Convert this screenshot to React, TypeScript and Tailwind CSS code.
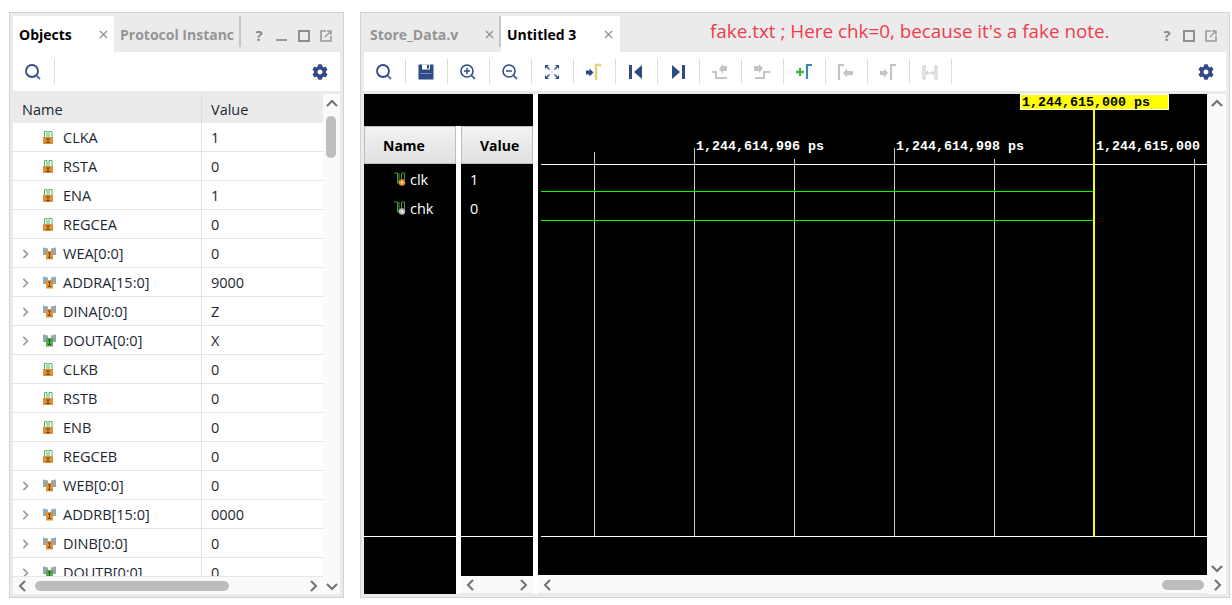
import type { ReactNode } from "react";
import { FaCog } from "react-icons/fa";

const ui = "font-['Open_Sans','Noto_Sans',sans-serif]";

type Row = { name: string; value: string; kind: "in" | "busIn" | "busOut" };

const rows: Row[] = [
  { name: "CLKA", value: "1", kind: "in" },
  { name: "RSTA", value: "0", kind: "in" },
  { name: "ENA", value: "1", kind: "in" },
  { name: "REGCEA", value: "0", kind: "in" },
  { name: "WEA[0:0]", value: "0", kind: "busIn" },
  { name: "ADDRA[15:0]", value: "9000", kind: "busIn" },
  { name: "DINA[0:0]", value: "Z", kind: "busIn" },
  { name: "DOUTA[0:0]", value: "X", kind: "busOut" },
  { name: "CLKB", value: "0", kind: "in" },
  { name: "RSTB", value: "0", kind: "in" },
  { name: "ENB", value: "0", kind: "in" },
  { name: "REGCEB", value: "0", kind: "in" },
  { name: "WEB[0:0]", value: "0", kind: "busIn" },
  { name: "ADDRB[15:0]", value: "0000", kind: "busIn" },
  { name: "DINB[0:0]", value: "0", kind: "busIn" },
  { name: "DOUTB[0:0]", value: "0", kind: "busOut" },
];

function PinIcon() {
  return (
    <svg width="10" height="13" viewBox="0 0 10 13" className="shrink-0">
      <path d="M1.5 6V0.5H4V6M6 6V0.5H9V6" fill="none" stroke="#55b25c" strokeWidth="1" />
      <rect x="0" y="6" width="10" height="7" fill="#dc9138" />
      <path d="M3 8H7M5 8V11.5M3 11.5H7" stroke="#6b4a20" strokeWidth="1" fill="none" />
    </svg>
  );
}

function BusIcon({ out }: { out?: boolean }) {
  return (
    <svg width="13" height="13" viewBox="0 0 13 13" className="shrink-0">
      <path d="M0 0.5L5 1.5V8H0ZM13 0.5L8 1.5V8H13Z" fill="#93a9b8" />
      <rect x="3" y="4" width="7" height="8.5" fill={out ? "#5aa84f" : "#e09338"} />
      <path d="M5 6H8M6.5 6V10.5M5 10.5H8" stroke={out ? "#1f5a1f" : "#6b4a20"} strokeWidth="1" fill="none" />
    </svg>
  );
}

function WaveIcon({ color }: { color: string }) {
  return (
    <svg width="12" height="15" viewBox="0 0 12 15" className="shrink-0">
      <path d="M0 1H3.5V11H5M5 11V1M7.5 8V1H10.5V8" fill="none" stroke="#3f9b45" strokeWidth="1" />
      <circle cx="8" cy="10.5" r="3.2" fill={color} />
      <circle cx="8" cy="10.5" r="1" fill="#fff" />
    </svg>
  );
}

function Chevron({ dir, className = "" }: { dir: "up" | "down" | "left" | "right"; className?: string }) {
  const d = {
    up: "M1 8L6 3L11 8",
    down: "M1 4L6 9L11 4",
    left: "M8 1L3 6L8 11",
    right: "M4 1L9 6L4 11",
  }[dir];
  return (
    <svg width="12" height="12" viewBox="0 0 12 12" className={className}>
      <path d={d} fill="none" stroke="#707070" strokeWidth="2" />
    </svg>
  );
}

function Glyph({ children }: { children: ReactNode }) {
  return (
    <svg width="18" height="18" viewBox="0 0 18 18">
      {children}
    </svg>
  );
}

const blue = "#2f4b85";
const dim = "#c4c4c4";

const SearchIcon = () => (
  <Glyph>
    <circle cx="8" cy="8" r="6" fill="none" stroke={blue} strokeWidth="1.8" />
    <path d="M12.5 12.5L16 16" stroke="#5a6f9d" strokeWidth="2" />
  </Glyph>
);
const SaveIcon = () => (
  <Glyph>
    <path d="M1.5 1.5H16.5V16.5H1.5Z" fill={blue} />
    <rect x="5" y="1.5" width="8" height="5" fill="#fff" />
    <rect x="10" y="2" width="2" height="3.5" fill={blue} />
    <rect x="3.5" y="10" width="11" height="1" fill="#7f93b8" />
  </Glyph>
);
const ZoomIn = () => (
  <Glyph>
    <circle cx="8" cy="8" r="6" fill="none" stroke={blue} strokeWidth="1.6" />
    <path d="M12.5 12.5L16 16" stroke="#5a6f9d" strokeWidth="2" />
    <path d="M5 8H11M8 5V11" stroke={blue} strokeWidth="1.5" />
  </Glyph>
);
const ZoomOut = () => (
  <Glyph>
    <circle cx="8" cy="8" r="6" fill="none" stroke={blue} strokeWidth="1.6" />
    <path d="M12.5 12.5L16 16" stroke="#5a6f9d" strokeWidth="2" />
    <path d="M5 8H11" stroke={blue} strokeWidth="1.5" />
  </Glyph>
);
const FitIcon = () => (
  <Glyph>
    <path d="M2 2H6L2 6ZM16 2H12L16 6ZM2 16H6L2 12ZM16 16H12L16 12Z" fill={blue} />
    <path d="M4 4L6.5 6.5M14 4L11.5 6.5M4 14L6.5 11.5M14 14L11.5 11.5" stroke={blue} strokeWidth="1.4" />
  </Glyph>
);
const GoCursor = () => (
  <Glyph>
    <path d="M1 7.5H4.5V5.5L8.5 9.5L4.5 13.5V11.5H1Z" fill={blue} />
    <path d="M11 17V2H16" fill="none" stroke="#e8cf7a" strokeWidth="2.4" />
  </Glyph>
);
const FirstIcon = () => (
  <Glyph>
    <rect x="2" y="2" width="3" height="14" fill={blue} />
    <path d="M15 2V16L7 9Z" fill={blue} />
  </Glyph>
);
const LastIcon = () => (
  <Glyph>
    <path d="M3 2V16L11 9Z" fill={blue} />
    <rect x="13" y="2" width="3" height="14" fill={blue} />
  </Glyph>
);
const PrevEdge = () => (
  <Glyph>
    <path d="M1 9H5V15H16" fill="none" stroke={dim} strokeWidth="2" />
    <path d="M16 3V8H12V11L8 6L12 1V3Z" fill={dim} />
  </Glyph>
);
const NextEdge = () => (
  <Glyph>
    <path d="M2 15H11V9H17" fill="none" stroke={dim} strokeWidth="2" />
    <path d="M1 3H6V1L10 5.5L6 10V8H1Z" fill={dim} />
  </Glyph>
);
const AddMarker = () => (
  <Glyph>
    <path d="M1 9H9M5 5V13" stroke="#43b649" strokeWidth="2.4" />
    <path d="M12 16V2H17" fill="none" stroke="#3d85b8" strokeWidth="2.2" />
  </Glyph>
);
const PrevMarker = () => (
  <Glyph>
    <path d="M2 17V2H7" fill="none" stroke={dim} strokeWidth="2.2" />
    <path d="M16 8H10V5.5L6 10L10 14.5V12H16Z" fill={dim} />
  </Glyph>
);
const NextMarker = () => (
  <Glyph>
    <path d="M1 8H5V5.5L9 10L5 14.5V12H1Z" fill={dim} />
    <path d="M12 17V2H17" fill="none" stroke={dim} strokeWidth="2.2" />
  </Glyph>
);
const SwapIcon = () => (
  <Glyph>
    <path d="M2 3H4V16H2ZM14 3H16V16H14Z" fill="none" stroke={dim} strokeWidth="1" />
    <path d="M5 10H13M5 10L7 8M5 10L7 12M13 10L11 8M13 10L11 12" stroke={dim} strokeWidth="1" fill="none" />
  </Glyph>
);

function Sep() {
  return <div className="h-[25px] w-px shrink-0 bg-[#dcdcdc]" />;
}

function Close({ className = "" }: { className?: string }) {
  return (
    <svg width="9" height="9" viewBox="0 0 9 9" className={className}>
      <path d="M1 1L8 8M8 1L1 8" stroke="#8f8f8f" strokeWidth="1.2" />
    </svg>
  );
}

function WinButtons({ noMin }: { noMin?: boolean }) {
  return (
    <div className="flex items-center">
      <span className="w-[14px] text-center text-[15px] font-bold leading-none text-[#8a8a8a]">?</span>
      {!noMin && (
        <svg width="12" height="12" viewBox="0 0 12 12" className="ml-[10px]">
          <rect x="0" y="9" width="11" height="2" fill="#9a9a9a" />
        </svg>
      )}
      <svg width="12" height="12" viewBox="0 0 12 12" className={noMin ? "ml-[9px]" : "ml-[10px]"}>
        <rect x="1" y="1" width="10" height="10" fill="none" stroke="#8f8f8f" strokeWidth="2" />
      </svg>
      <svg width="12" height="12" viewBox="0 0 12 12" className="ml-[10px]">
        <path d="M6 1H1V11H11V6" fill="none" stroke="#9a9a9a" strokeWidth="1.6" />
        <path d="M5 7L11 1M7 1H11V5" fill="none" stroke="#9a9a9a" strokeWidth="1.4" />
      </svg>
    </div>
  );
}

function ObjectsPanel() {
  return (
    <div className="flex h-[586px] w-[335px] shrink-0 flex-col border border-[#d2d2d2] bg-[#ebebeb] p-[3px]">
      <div className="flex h-[36px] shrink-0">
        <div className="flex w-[101px] items-center bg-white pl-[6px] pr-[6px]">
          <span className="flex-1 text-[14px] font-bold text-black">Objects</span>
          <Close />
        </div>
        <div className="flex w-[125px] items-center overflow-hidden whitespace-nowrap pl-[6px] text-[14px] font-bold text-[#949494]">
          Protocol Instanc
        </div>
        <div className="h-[31px] w-[2px] shrink-0 bg-[#c6c6c6]" />
        <div className="flex-1 pl-[11px] pt-[12px]">
          <WinButtons />
        </div>
      </div>
      <div className="flex h-[39px] shrink-0 items-center bg-white pl-[11px] pr-[12px]">
        <SearchIcon />
        <div className="ml-[12px]">
          <Sep />
        </div>
        <FaCog className="ml-auto text-[16px] text-[#2f4b85]" />
      </div>
      <div className="mt-[3px] flex min-h-0 flex-1 flex-col bg-white">
        <div className="flex min-h-0 flex-1">
          <div className="h-[482px] w-[310px] overflow-hidden">
            <div className="flex h-[29px] bg-[#ebebeb] text-[14.5px] text-[#1c2733]">
              <div className="flex w-[189px] items-center border-r border-[#dcdcdc] pl-[9px] pt-[2px]">Name</div>
              <div className="flex flex-1 items-center pl-[9px] pt-[2px]">Value</div>
            </div>
            {rows.map((r) => (
              <div key={r.name} className="flex h-[29px] border-b border-[#e4e4e4] text-[14.5px] text-[#1c2733]">
                <div className="flex w-[189px] items-center border-r border-[#e4e4e4] pt-[1px]">
                  <span className="flex w-[30px] justify-end pr-[13px]">
                    {r.kind !== "in" && <Chevron dir="right" className="h-[10px] w-[10px] opacity-70" />}
                  </span>
                  <span className="flex w-[20px] justify-start">
                    {r.kind === "in" ? <PinIcon /> : <BusIcon out={r.kind === "busOut"} />}
                  </span>
                  <span>{r.name}</span>
                </div>
                <div className="flex flex-1 items-center pl-[9px] pt-[1px]">{r.value}</div>
              </div>
            ))}
          </div>
          <div className="flex h-[500px] w-[17px] flex-col items-center bg-[#fafafa] pt-[4px]">
            <Chevron dir="up" />
            <div className="mr-[1px] mt-[6px] h-[42px] w-[10px] rounded-[5px] bg-[#bdbdbd]" />
            <Chevron dir="down" className="mt-auto mb-[2px]" />
          </div>
        </div>
      </div>
      <div className="-mt-[18px] flex h-[18px] w-[310px] shrink-0 items-center border-t border-[#e6e6e6] bg-[#fafafa] pl-[4px]">
        <Chevron dir="left" />
        <div className="ml-[6px] h-[10px] w-[194px] rounded-[5px] bg-[#bdbdbd]" />
        <Chevron dir="right" className="ml-auto mr-[4px]" />
      </div>
    </div>
  );
}

const toolbar = [
  SearchIcon,
  SaveIcon,
  ZoomIn,
  ZoomOut,
  FitIcon,
  GoCursor,
  FirstIcon,
  LastIcon,
  PrevEdge,
  NextEdge,
  AddMarker,
  PrevMarker,
  NextMarker,
  SwapIcon,
];

function Plot() {
  const ticks = [
    { x: 594, top: 152 },
    { x: 694, top: 148 },
    { x: 794, top: 159 },
    { x: 894, top: 148 },
    { x: 994, top: 159 },
    { x: 1194, top: 159 },
  ];
  const mono = { fontFamily: "'Liberation Mono', monospace", fontSize: 13.33, fontWeight: 700 };
  return (
    <svg width="669" height="481" viewBox="538 94 669 481" className="block">
      <rect x="538" y="94" width="669" height="481" fill="#000" />
      {ticks.map((t) => (
        <rect key={t.x} x={t.x} y={t.top} width="1" height={537 - t.top} fill="#c8c8c8" />
      ))}
      <rect x="541" y="164" width="666" height="1" fill="#fff" />
      <rect x="541" y="191" width="552" height="1" fill="#00ff00" />
      <rect x="541" y="220" width="552" height="1" fill="#00ff00" />
      <rect x="541" y="536" width="666" height="1" fill="#fff" />
      <rect x="1093" y="109" width="2" height="428" fill="#ffff00" />
      <rect x="1020.5" y="94.5" width="148" height="15" fill="#ffff00" stroke="#fff" />
      <text x="1022" y="106" fill="#000" style={mono}>1,244,615,000 ps</text>
      <text x="696" y="150" fill="#fff" style={mono}>1,244,614,996 ps</text>
      <text x="896" y="150" fill="#fff" style={mono}>1,244,614,998 ps</text>
      <text x="1096" y="150" fill="#fff" style={mono}>1,244,615,000</text>
    </svg>
  );
}

const headCell =
  "flex h-[38px] items-center border border-[#bdbdbd] bg-gradient-to-b from-[#f2f2f2] to-[#e0e0e0] pl-[18px] text-[14px] font-bold text-black";

function WavePanel() {
  return (
    <div className="flex h-[586px] w-[870px] shrink-0 flex-col border border-[#d2d2d2] bg-[#ebebeb] p-[3px]">
      <div className="flex h-[36px] shrink-0">
        <div className="flex w-[135px] items-center pl-[6px] pr-[5px]">
          <span className="flex-1 text-[14px] font-bold text-[#949494]">Store_Data.v</span>
          <Close />
        </div>
        <div className="h-[31px] w-[2px] shrink-0 bg-[#c6c6c6]" />
        <div className="flex w-[119px] items-center bg-white pl-[6px] pr-[7px]">
          <span className="flex-1 text-[14px] font-bold text-black">Untitled 3</span>
          <Close />
        </div>
        <div className="ml-[90px] whitespace-nowrap pt-[1px] text-[18.85px] text-[#ef3b50]">
          fake.txt ; Here chk=0, because it's a fake note.
        </div>
        <div className="ml-auto pr-[9px] pt-[12px]">
          <WinButtons noMin />
        </div>
      </div>
      <div className="flex h-[39px] shrink-0 items-center bg-white pl-[11px] pr-[12px]">
        {toolbar.map((Icon, i) => (
          <div key={i} className="flex items-center">
            <div className="flex w-[18px] justify-center">
              <Icon />
            </div>
            <div className="ml-[12px] mr-[11px]">
              <Sep />
            </div>
          </div>
        ))}
        <FaCog className="ml-auto text-[16px] text-[#2f4b85]" />
      </div>
      <div className="mt-[3px] flex h-[500px] bg-white">
        <div className="flex w-[169px] shrink-0 flex-col">
          <div className="h-[32px] shrink-0 bg-black" />
          <div className="flex min-h-0 flex-1">
            <div className="flex w-[92px] shrink-0 flex-col bg-black">
              <div className={headCell}>Name</div>
              <div className="flex h-[373px] flex-col border-b border-white pt-[1px] text-[14.5px] text-white">
                <div className="flex h-[29px] items-center pl-[30px]">
                  <WaveIcon color="#e8912d" />
                  <span className="ml-[4px]">clk</span>
                </div>
                <div className="flex h-[29px] items-center pl-[30px]">
                  <WaveIcon color="#bdbdbd" />
                  <span className="ml-[4px]">chk</span>
                </div>
              </div>
            </div>
            <div className="ml-[5px] flex w-[72px] shrink-0 flex-col">
              <div className="h-[450px] bg-black">
                <div className={headCell}>Value</div>
                <div className="flex h-[373px] flex-col border-b border-white pl-[9px] pt-[1px] text-[14.5px] text-white">
                  <div className="flex h-[29px] items-center">1</div>
                  <div className="flex h-[29px] items-center">0</div>
                </div>
              </div>
              <div className="flex h-[18px] items-center justify-between border-b border-[#e6e6e6] bg-[#fafafa] px-[4px]">
                <Chevron dir="left" />
                <Chevron dir="right" />
              </div>
            </div>
          </div>
        </div>
        <div className="ml-[5px] flex w-[669px] shrink-0 flex-col">
          <Plot />
          <div className="mt-px flex h-[18px] items-center border-b border-[#e6e6e6] bg-[#fafafa] pl-[4px] pr-[3px]">
            <Chevron dir="left" />
            <div className="ml-auto h-[10px] w-[42px] rounded-[5px] bg-[#bdbdbd]" />
          </div>
        </div>
        <div className="flex w-[19px] shrink-0 flex-col items-center bg-[#fafafa] pt-[4px]">
          <Chevron dir="up" />
          <Chevron dir="down" className="mt-[452px]" />
          <Chevron dir="right" className="mt-auto mb-[3px]" />
        </div>
      </div>
    </div>
  );
}

export default function App() {
  return (
    <div className={`flex h-[605px] w-[1232px] gap-[16px] overflow-hidden bg-white pl-[9px] pt-[12px] ${ui}`}>
      <ObjectsPanel />
      <WavePanel />
    </div>
  );
}
